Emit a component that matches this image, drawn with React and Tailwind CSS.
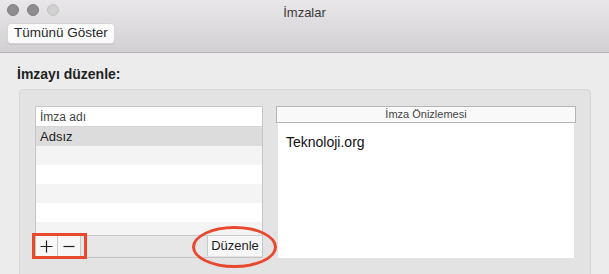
import React from 'react';

const font = { fontFamily: '"Liberation Sans", Arial, sans-serif' };

const TrafficLights = () => (
  <div className="flex gap-[8px] absolute left-[7px] top-[4px]">
    <span className="w-[12px] h-[12px] rounded-full bg-[#8e8e90] border border-[#7f7f81]" />
    <span className="w-[12px] h-[12px] rounded-full bg-[#8e8e90] border border-[#7f7f81]" />
    <span className="w-[12px] h-[12px] rounded-full bg-[#d0d0d0] border border-[#c2c2c2]" />
  </div>
);

const rows = ['bg-[#f4f4f4]', 'bg-white', 'bg-[#f4f4f4]', 'bg-white', 'bg-[#f4f4f4]'];

export default function App() {
  return (
    <div className="w-[609px] h-[274px] overflow-hidden bg-[#ececec] text-[#222]" style={font}>
      {/* Title bar */}
      <div className="relative h-[53px] bg-gradient-to-b from-[#e9e7e9] to-[#d2d0d2] border-b border-[#b1b1b1]">
        <TrafficLights />
        <div className="text-center text-[13px] text-[#3a3a3a] pt-[3px]">İmzalar</div>
        <div className="absolute left-[7px] top-[23px] h-[21px] px-[6px] flex items-center bg-[#fbfbfb] border border-[#d6d6d6] rounded-[4px] text-[13.5px] text-[#2a2a2a] shadow-[0_1px_0_rgba(0,0,0,0.08)]">
          Tümünü Göster
        </div>
      </div>

      {/* Content */}
      <div className="pl-[17px] pt-[13px]">
        <div className="text-[14px] font-bold text-[#1f1f1f] leading-[16px]">İmzayı düzenle:</div>
        <div className="mt-[7px] ml-[2px] w-[572px] h-[200px] bg-[#e3e3e3] border border-[#d6d6d6] rounded-t-[4px] pt-[16px] pl-[15px] flex gap-[13px]">
          {/* List */}
          <div className="w-[228px] h-[152px] border border-[#c6c6c6] flex flex-col">
            <div className="h-[20px] bg-white border-b border-[#d6d6d6] text-[12px] text-[#444] pl-[4px] flex items-center">İmza adı</div>
            <div className="h-[19px] bg-[#dcdcdc] text-[13px] text-[#1e1e1e] pl-[4px] flex items-center">Adsız</div>
            {rows.map((c, i) => (
              <div key={i} className={`${c} ${i === 4 ? 'h-[13px]' : 'h-[19px]'}`} />
            ))}
            <div className="h-[21px] bg-[#e7e7e7] border-t border-[#c9c9c9] flex items-stretch justify-between">
              <div className="relative flex">
                <div className="w-[22px] flex items-center justify-center bg-[#f7f7f7] border-r border-[#c9c9c9]">
                  <svg width="13" height="13" viewBox="0 0 13 13">
                    <path d="M6.5 0.5V12.5M0.5 6.5H12.5" stroke="#1e1e1e" strokeWidth="1.2" fill="none" />
                  </svg>
                </div>
                <div className="w-[23px] flex items-center justify-center bg-[#f7f7f7] border-r border-[#c9c9c9]">
                  <svg width="12" height="13" viewBox="0 0 12 13">
                    <path d="M0.5 6.5H11.5" stroke="#1e1e1e" strokeWidth="1.2" fill="none" />
                  </svg>
                </div>
                <div className="absolute left-[-4px] top-[-3px] w-[55px] h-[26px] border-[3px] border-[#e8482e]" />
              </div>
              <div className="relative flex">
                <div className="w-[55px] flex items-center justify-center bg-[#f7f7f7] border-l border-[#c9c9c9] text-[13px] text-[#1e1e1e]">Düzenle</div>
                <div className="absolute left-[-15px] top-[-10px] w-[85px] h-[42px] rounded-[50%] border-[3px] border-[#e8482e]" />
              </div>
            </div>
          </div>

          {/* Preview */}
          <div className="w-[300px] flex flex-col">
            <div className="h-[17px] bg-[#f9f9f9] border border-[#b5b5b5] text-[11px] text-[#444] flex items-center justify-center">İmza Önizlemesi</div>
            <div className="mx-[2px] h-[135px] bg-white pl-[8px] pt-[9px] text-[14px] text-[#111]">Teknoloji.org</div>
          </div>
        </div>
      </div>
    </div>
  );
}
